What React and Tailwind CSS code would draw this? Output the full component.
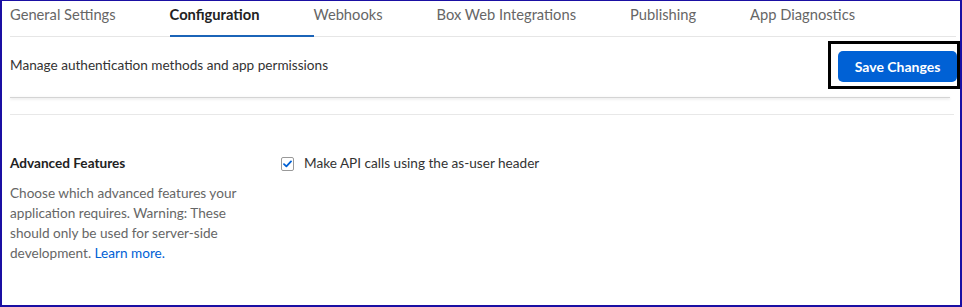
import React from 'react';

const tabs = ['General Settings', 'Configuration', 'Webhooks', 'Box Web Integrations', 'Publishing', 'App Diagnostics'];

export default function App() {
  return (
    <div
      className="w-[962px] h-[307px] bg-white border-t border-l-2 border-r-2 border-b-2 border-[#1a0fa3] overflow-hidden"
      style={{ fontFamily: 'Lato, "Open Sans", sans-serif' }}
    >
      <div className="pl-2 pr-[4px]">
        {/* tabs */}
        <div className="flex h-[36px] border-b border-[#e6e6e6]">
          {tabs.map((t) => (
            <div
              key={t}
              className={`pr-[54px] pt-[2px] text-[14.7px] leading-[22px] ${
                t === 'Configuration'
                  ? 'font-bold text-[#222] border-b-2 border-[#1b64b8] -mb-px'
                  : 'text-[#666]'
              }`}
            >
              {t}
            </div>
          ))}
        </div>

        {/* header */}
        <div className="flex items-center justify-between h-[60px]">
          <p className="text-[13.6px] text-[#333] leading-5 -mt-[4px]">Manage authentication methods and app permissions</p>
          <div className="border-[3px] border-black pl-[7px] pr-0 pt-[7px] pb-[4px] -mr-[4px] -mt-[4px]">
            <button className="h-[31px] w-[119px] rounded-[5px] bg-[#0061d5] text-white text-[14px] font-bold">
              Save Changes
            </button>
          </div>
        </div>
        <div className="h-px bg-[#d4d4d4] shadow-[0_1px_3px_rgba(0,0,0,0.18)] mr-[6px]"></div>
        <div className="h-px bg-[#e8e8e8] mt-[16px] mr-[2px]"></div>

        {/* section */}
        <div className="flex pt-[38px]">
          <div className="w-[240px] shrink-0">
            <h3 className="text-[13.6px] font-bold text-[#222] leading-5">Advanced Features</h3>
            <p className="mt-[10px] text-[13.6px] leading-5 text-[#666]">
              Choose which advanced features your application requires. Warning: These should only be used for server-side development.{' '}
              <a className="text-[#0061d5]">Learn more.</a>
            </p>
          </div>
          <label className="flex items-start ml-[31px] text-[13.6px] text-[#333] leading-5">
            <span className="mt-[4px] w-[13px] h-[14px] border border-[#999] rounded-[2px] flex items-center justify-center">
              <svg width="9" height="8" viewBox="0 0 9 8">
                <path d="M1 4.2 L3.4 6.4 L8 1.4" fill="none" stroke="#0061d5" strokeWidth="1.8" strokeLinecap="round" strokeLinejoin="round" />
              </svg>
            </span>
            <span className="ml-[10px]">Make API calls using the as-user header</span>
          </label>
        </div>
      </div>
    </div>
  );
}
